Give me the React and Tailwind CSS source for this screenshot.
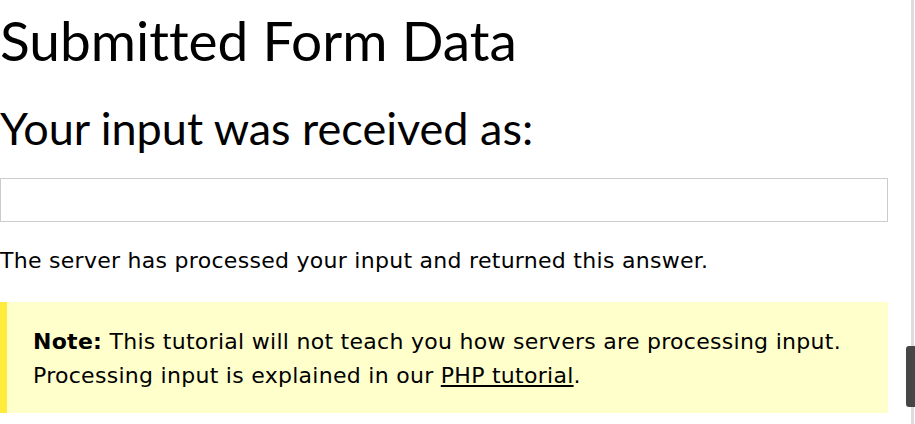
export default function App() {
  return (
    <div className="relative min-h-[424px] w-[915px] overflow-hidden bg-white text-black">
      <div className="w-[888px]">
        <h1 className="pt-[4px] text-[55px] leading-[72px] font-normal [font-variant-ligatures:none] font-['Lato','Open_Sans',sans-serif]">
          Submitted Form Data
        </h1>
        <h2 className="mt-[23px] text-[45px] leading-[58px] font-normal [font-variant-ligatures:none] font-['Lato','Open_Sans',sans-serif]">
          Your input was received as:
        </h2>
        <div className="mt-[21px] h-[44px] w-full border border-[#cccccc] bg-white"></div>
        <p className="mt-[23px] text-[22px] leading-[32px] tracking-[0.28px] font-['DejaVu_Sans',Verdana,sans-serif]">
          The server has processed your input and returned this answer.
        </p>
        <div className="mt-[25px] border-l-[7px] border-[#ffeb3b] bg-[#ffffcc] pt-[23px] pb-[20px] pl-[26px] pr-4 text-[22px] leading-[34px] tracking-[0.28px] font-['DejaVu_Sans',Verdana,sans-serif]">
          <p>
            <b>Note:</b> This tutorial will not teach you how servers are processing input.
            Processing input is explained in our{" "}
            <a href="#" className="underline">PHP tutorial</a>.
          </p>
        </div>
      </div>
      {/* scrollbar track + thumb */}
      <div className="absolute right-[1px] top-0 h-full w-[3px] bg-[#dcdcdc]"></div>
      <div className="absolute right-0 top-[346px] h-[61px] w-[9px] rounded-l-[3px] bg-[#464646]"></div>
    </div>
  );
}
